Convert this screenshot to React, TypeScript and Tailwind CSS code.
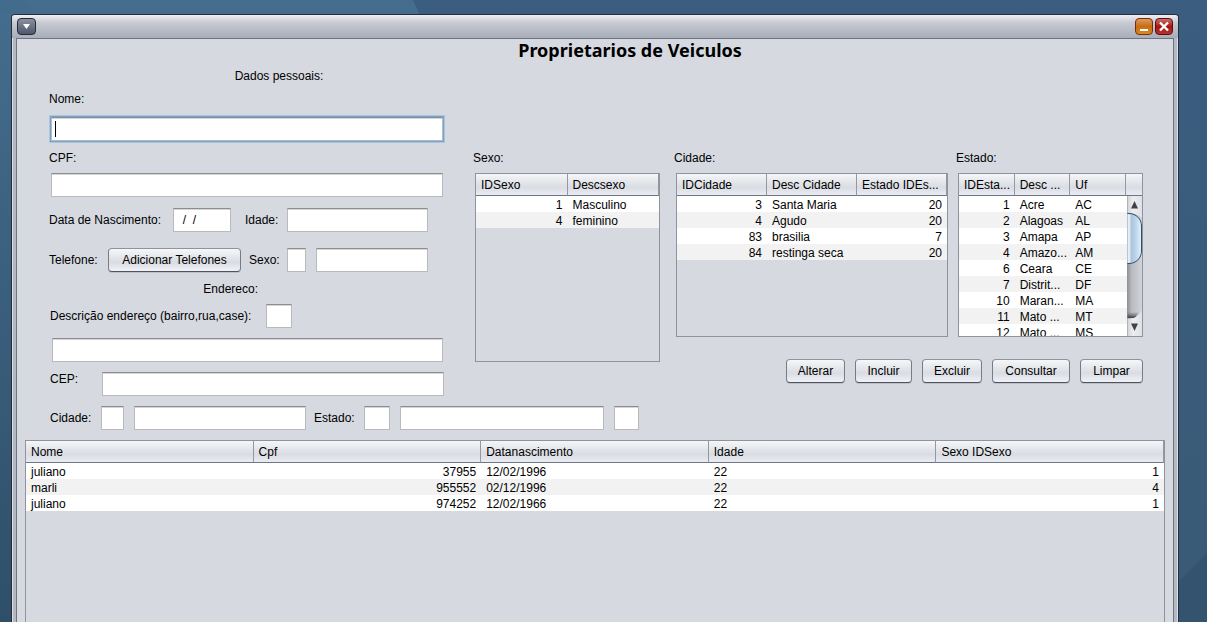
import type { InputHTMLAttributes, ReactNode } from "react";

function Field({ className = "px-1", ...props }: InputHTMLAttributes<HTMLInputElement>) {
  return (
    <input
      type="text"
      className={`h-6 min-w-0 border border-t-[#8c8d90] border-r-[#b9babc] border-b-[#b9babc] border-l-[#b9babc] bg-white outline-none shadow-[inset_0_1px_0_#d6d6d6] ${className}`}
      {...props}
    />
  );
}

function Button({ children, className }: { children: ReactNode; className: string }) {
  return (
    <button
      type="button"
      className={`h-6 shrink-0 rounded-[4px] border border-t-[#8f949c] border-r-[#777c84] border-b-[#4f545c] border-l-[#777c84] bg-linear-to-b from-[#f6f7f9] via-[#d9dce2] via-60% to-[#f0f2f8] whitespace-nowrap shadow-[0_1px_0_#bcc0c8] ${className}`}
    >
      {children}
    </button>
  );
}

type GridProps = {
  label: string;
  columns: string[];
  numeric: number[];
  rows: string[][];
  scroll?: boolean;
  className?: string;
};

function DataGrid({ label, columns, numeric, rows, scroll = false, className = "" }: GridProps) {
  return (
    <div className={`relative overflow-hidden border border-[#8e939d] ${className}`}>
      <table aria-label={label} className="w-full table-fixed border-separate border-spacing-0">
        <thead>
          <tr className="bg-linear-to-b from-[#f5f6f8] via-[#d9dce2] via-60% to-[#ebeef5]">
            {columns.map((c) => (
              <th
                key={c}
                className="h-[22px] overflow-hidden border-r border-b border-r-[#9398a1] border-b-[#6f7682] p-0 pl-[5px] text-left font-normal whitespace-nowrap"
              >
                {c}
              </th>
            ))}
            {scroll && <td className="w-4 border-b border-[#6f7682] p-0" />}
          </tr>
        </thead>
        <tbody className="leading-[14px]">
          {rows.map((row, r) => (
            <tr key={r} className="odd:bg-white even:bg-[#f2f2f2]">
              {row.map((cell, i) => (
                <td
                  key={i}
                  className={`h-4 overflow-hidden p-0 pt-0.5 whitespace-nowrap ${numeric.includes(i) ? "pr-[5px] text-right" : "pl-[5px]"}`}
                >
                  {cell}
                </td>
              ))}
              {scroll && <td className="p-0" />}
            </tr>
          ))}
        </tbody>
      </table>
      {scroll && <ScrollBar />}
    </div>
  );
}

function ScrollBar() {
  return (
    <svg className="absolute right-0 bottom-0 h-[140px] w-[15px]" viewBox="0 0 15 140" aria-hidden="true">
      <defs>
        <linearGradient id="track">
          <stop offset="0" stopColor="#8d8e93" />
          <stop offset="0.3" stopColor="#b9babf" />
          <stop offset="1" stopColor="#d3d4d9" />
        </linearGradient>
        <linearGradient id="arrowBox">
          <stop offset="0" stopColor="#cfd1d6" />
          <stop offset="0.4" stopColor="#eceef1" />
          <stop offset="1" stopColor="#dfe1e6" />
        </linearGradient>
        <linearGradient id="thumb">
          <stop offset="0" stopColor="#f0f6fb" />
          <stop offset="0.2" stopColor="#dbe7f2" />
          <stop offset="0.3" stopColor="#a9c4dc" />
          <stop offset="0.6" stopColor="#bcd5ea" />
          <stop offset="1" stopColor="#e2f3ff" />
        </linearGradient>
        <linearGradient id="trackEnd" x1="0" y1="0" x2="0" y2="1">
          <stop offset="0" stopColor="#55565b" stopOpacity="0" />
          <stop offset="1" stopColor="#3c3d42" />
        </linearGradient>
      </defs>
      <rect width="15" height="140" fill="url(#track)" />
      <path d="M0 116H12L8 122H0Z" fill="url(#trackEnd)" />
      <path d="M0 0H15V22Q10 17 0 17Z" fill="url(#arrowBox)" />
      <path d="M0 140H15V114Q11 122 4 122.500H0Z" fill="url(#arrowBox)" />
      <path d="M0 17.500H2C9 17.500 14.500 23 14.500 30V55C14.500 62 9 67.500 2 67.500H0" fill="url(#thumb)" stroke="#334c63" />
      <path d="M7.500 5L11 12.500H4Z" fill="#404246" />
      <path d="M7.500 135L11 127.500H4Z" fill="#404246" />
      <path d="M.5 0V140" stroke="#8e939d" strokeOpacity=".5" />
    </svg>
  );
}

function Wallpaper() {
  return (
    <svg className="absolute inset-0 h-full w-full" viewBox="0 0 1207 622" preserveAspectRatio="none" aria-hidden="true">
      <defs>
        <linearGradient id="skyLeft" x1="0" y1="0" x2="0" y2="1">
          <stop offset="0" stopColor="#446d8e" />
          <stop offset="1" stopColor="#2f4f69" />
        </linearGradient>
        <linearGradient id="skyRight" x1="0" y1="0" x2="0" y2="1">
          <stop offset="0" stopColor="#3a5d80" />
          <stop offset="1" stopColor="#3a5b76" />
        </linearGradient>
      </defs>
      <rect width="1207" height="622" fill="url(#skyLeft)" />
      <path d="M413 0H1207V622H700Z" fill="url(#skyRight)" />
      <path d="M25 0L32 14H0V0Z" fill="#436b8c" />
      <path d="M1207 553L1130 630H1207Z" fill="#33536e" />
    </svg>
  );
}

function TitleBar() {
  return (
    <header className="flex h-[23px] items-center justify-between bg-linear-to-b from-[#f0eff4] via-[#c6c9d1] via-35% to-[#a9adb9] px-[5px]">
      <button
        type="button"
        aria-label="Menu da janela"
        className="flex h-[17px] w-[19px] items-center justify-center rounded-[4px] border border-[#262a36] bg-linear-to-b from-[#8b909f] to-[#4f586c]"
      >
        <svg width="9" height="7" viewBox="0 0 9 7" aria-hidden="true">
          <path d="M1 1H8L4.500 6Z" fill="#fff" />
        </svg>
      </button>
      <div className="flex gap-0.5">
        <button
          type="button"
          aria-label="Minimizar"
          className="flex h-[17px] w-[18px] items-center justify-center rounded-[4px] border border-[#7a2c0a] bg-linear-to-b from-[#dc9a58] via-[#c76c10] to-[#d98a22]"
        >
          <svg width="14" height="13" viewBox="0 0 14 13" aria-hidden="true">
            <path d="M3 10H11" stroke="#fff" strokeWidth="2" />
          </svg>
        </button>
        <button
          type="button"
          aria-label="Fechar"
          className="flex h-[17px] w-[18px] items-center justify-center rounded-[4px] border border-[#5e0d0f] bg-linear-to-b from-[#cd6a64] via-[#a31712] to-[#b8312a]"
        >
          <svg width="14" height="13" viewBox="0 0 14 13" aria-hidden="true">
            <path d="M3 2.500L11 10.500M11 2.500L3 10.500" stroke="#fff" strokeWidth="2.400" />
          </svg>
        </button>
      </div>
    </header>
  );
}

const sexos = [
  ["1", "Masculino"],
  ["4", "feminino"],
];

const cidades = [
  ["3", "Santa Maria", "20"],
  ["4", "Agudo", "20"],
  ["83", "brasilia", "7"],
  ["84", "restinga seca", "20"],
];

const estados = [
  ["1", "Acre", "AC"],
  ["2", "Alagoas", "AL"],
  ["3", "Amapa", "AP"],
  ["4", "Amazo...", "AM"],
  ["6", "Ceara", "CE"],
  ["7", "Distrit...", "DF"],
  ["10", "Maran...", "MA"],
  ["11", "Mato ...", "MT"],
  ["12", "Mato ...", "MS"],
];

const proprietarios = [
  ["juliano", "37955", "12/02/1996", "22", "1"],
  ["marli", "955552", "02/12/1996", "22", "4"],
  ["juliano", "974252", "12/02/1966", "22", "1"],
];

export default function App() {
  return (
    <div className="relative flex min-h-screen flex-col bg-[#3a5c7a] pt-3.5 pr-7 pl-[11px] font-['Liberation_Sans',Arial,sans-serif] text-[12px] leading-4 text-black">
      <Wallpaper />
      <div className="relative flex flex-1 flex-col overflow-hidden rounded-t-[4px] border border-b-0 border-[#262d3a] bg-[#a8acb8]">
        <TitleBar />
        <main className="mx-1 flex flex-1 flex-col border border-b-0 border-[#6c7482] bg-[#d6d9e0] shadow-[-3px_0_0_#b4b8c3,-4px_0_0_#dddfe6,3px_0_0_#b4b8c3,4px_0_0_#dddfe6]">
          <h1 className="h-6 pl-[70px] text-center font-['Noto_Sans',sans-serif] text-[18px] leading-[22px] font-bold">
            Proprietarios de Veiculos
          </h1>

          <div className="flex items-start gap-7 pr-[30px] pl-8">
            <form className="flex w-[396px] shrink-0 flex-col pt-[5px]">
              <h2 className="pl-16 text-center">Dados pessoais:</h2>
              <label htmlFor="nome" className="mt-[7px]">
                Nome:
              </label>
              <div className="relative mx-0.5 mt-2.5 flex">
                <Field
                  id="nome"
                  className="flex-1 px-1 caret-transparent ring-1 ring-[#73a4d1] outline-1! outline-offset-1! outline-[#aac5e0]! outline-solid!"
                />
                <span className="absolute top-1 left-1 h-4 w-px bg-black" />
              </div>
              <label htmlFor="cpf" className="mt-[9px]">
                CPF:
              </label>
              <Field id="cpf" className="mx-0.5 mt-[7px] px-1" />

              <div className="mt-[11px] flex items-center">
                <label htmlFor="nascimento" className="w-[124px]">
                  Data de Nascimento:
                </label>
                <Field id="nascimento" defaultValue="  /  /" className="w-[58px] pl-0.5" />
                <label htmlFor="idade" className="ml-3.5 w-[42px]">
                  Idade:
                </label>
                <Field id="idade" className="w-[141px] px-1" />
              </div>

              <div className="mt-4 flex items-center">
                <span className="w-[59px]">Telefone:</span>
                <Button className="w-[133px]">Adicionar Telefones</Button>
                <label htmlFor="sexo-id" className="ml-2 w-[38px]">
                  Sexo:
                </label>
                <Field id="sexo-id" className="w-[19px] px-1" />
                <Field aria-label="Descrição do sexo" className="ml-2.5 w-[112px] px-1" />
              </div>

              <div className="flex flex-col pl-px">
                <h2 className="mt-[9px] w-[208px] text-right">Endereco:</h2>
                <div className="mt-[7px] flex items-center">
                  <label htmlFor="endereco-id" className="w-[216px] whitespace-nowrap">
                    Descrição endereço (bairro,rua,case):
                  </label>
                  <Field id="endereco-id" className="w-[26px] px-1" />
                </div>
                <Field aria-label="Descrição endereço" className="mx-0.5 mt-2.5 px-1" />
                <div className="mt-2.5 mr-px flex items-start">
                  <label htmlFor="cep" className="w-[52px] leading-[14px]">
                    CEP:
                  </label>
                  <Field id="cep" className="flex-1 px-1" />
                </div>
              </div>
            </form>

            <div className="flex min-w-0 flex-1 items-start gap-3.5 pt-[87px]">
              <section className="min-w-0 flex-[187]">
                <h2>Sexo:</h2>
                <DataGrid
                  label="Sexo"
                  columns={["IDSexo", "Descsexo"]}
                  numeric={[0]}
                  rows={sexos}
                  className="mt-[7px] ml-0.5 h-[189px]"
                />
              </section>
              <div className="min-w-0 flex-[469]">
                <div className="flex gap-2">
                  <section className="min-w-0 flex-[274]">
                    <h2>Cidade:</h2>
                    <DataGrid
                      label="Cidade"
                      columns={["IDCidade", "Desc Cidade", "Estado IDEs..."]}
                      numeric={[0, 2]}
                      rows={cidades}
                      className="mt-[7px] ml-0.5 h-[164px]"
                    />
                  </section>
                  <section className="min-w-0 flex-[187]">
                    <h2>Estado:</h2>
                    <DataGrid
                      label="Estado"
                      columns={["IDEsta...", "Desc ...", "Uf"]}
                      numeric={[0]}
                      rows={estados}
                      scroll
                      className="mt-[7px] ml-0.5 h-[164px]"
                    />
                  </section>
                </div>
                <div className="mt-[22px] flex justify-end gap-2.5">
                  <Button className="w-[59px]">Alterar</Button>
                  <Button className="w-[57px]">Incluir</Button>
                  <Button className="w-[60px]">Excluir</Button>
                  <Button className="w-[78px]">Consultar</Button>
                  <Button className="w-[63px]">Limpar</Button>
                </div>
              </div>
            </div>
          </div>

          <div className="mt-2.5 flex items-center pl-[33px]">
            <label htmlFor="cidade-id" className="w-[51px]">
              Cidade:
            </label>
            <Field id="cidade-id" className="w-[23px] px-1" />
            <Field aria-label="Nome da cidade" className="ml-2.5 w-[172px] px-1" />
            <label htmlFor="estado-id" className="ml-2 w-[50px]">
              Estado:
            </label>
            <Field id="estado-id" className="w-[26px] px-1" />
            <Field aria-label="Nome do estado" className="ml-2.5 w-[204px] px-1" />
            <Field aria-label="UF" className="ml-2.5 w-[25px] px-1" />
          </div>

          <DataGrid
            label="Proprietarios"
            columns={["Nome", "Cpf", "Datanascimento", "Idade", "Sexo IDSexo"]}
            numeric={[1, 4]}
            rows={proprietarios}
            className="mx-2 mt-2.5 flex-1 border-b-0"
          />
        </main>
      </div>
    </div>
  );
}
